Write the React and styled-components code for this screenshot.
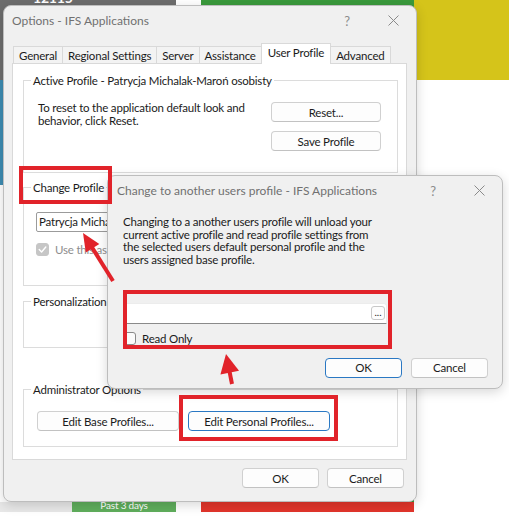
import React from "react";
import styled, { createGlobalStyle } from "styled-components";

const GlobalStyle = createGlobalStyle`
  html, body { margin: 0; padding: 0; background: #fff; }
  body {
    font-family: Lato, "Noto Sans", sans-serif;
    font-size: 11.5px;
    letter-spacing: -0.2px;
    color: #1b1b1b;
  }
`;

const Desktop = styled.div`
  position: relative;
  width: 509px;
  height: 521px;
  overflow: hidden;
  background: #fff;
`;

const Backdrop = styled.div`
  display: grid;
  grid-template-columns: 3px 69px 104px 25px 213px 95px;
  grid-template-rows: 80px 105px 317px 10px 1fr;
  width: 509px;
  height: 521px;
`;

const Tile = styled.div`
  grid-column: ${(p) => p.$col};
  grid-row: ${(p) => p.$row};
  background: ${(p) => p.$bg};
  color: #fff;
  overflow: hidden;
  display: flex;
  justify-content: ${(p) => (p.$center ? "center" : "flex-start")};
`;

const TileNumber = styled.span`
  margin: -9px 0 0 33px;
  font-weight: bold;
  font-size: 14px;
  line-height: 14px;
`;

const TileCaption = styled.span`
  margin-top: -2px;
  font-size: 10px;
  line-height: 10px;
`;

const Window = styled.div`
  position: absolute;
  left: ${(p) => p.$x}px;
  top: ${(p) => p.$y}px;
  width: ${(p) => p.$w}px;
  height: ${(p) => p.$h}px;
  box-sizing: border-box;
  background: #f0f0f0;
  border: 1px solid #bdbdbd;
  border-radius: 8px;
  box-shadow: 0 3px 12px rgba(0, 0, 0, 0.16);
  display: flex;
  flex-direction: column;
  overflow: hidden;
`;

const TitleBar = styled.div`
  flex: none;
  height: ${(p) => p.$h}px;
  display: flex;
  align-items: center;
  padding-left: ${(p) => p.$pad}px;
`;

const Title = styled.div`
  flex: 1;
  color: #707070;
  font-size: 12px;
  letter-spacing: 0;
  white-space: nowrap;
`;

const CaptionButton = styled.div`
  width: 46px;
  height: 100%;
  display: flex;
  align-items: center;
  justify-content: center;
  color: #8c8c8c;
  font-size: 13px;
`;

const Body = styled.div`
  flex: 1;
  display: flex;
  flex-direction: column;
  padding: 8px 9px 0 8px;
`;

const TabStrip = styled.div`
  display: flex;
  align-items: flex-end;
  height: 20px;
  padding-left: 1px;
  position: relative;
  z-index: 1;
`;

const Tab = styled.div`
  box-sizing: border-box;
  height: ${(p) => (p.$active ? 21 : 17)}px;
  margin-left: -1px;
  margin-bottom: ${(p) => (p.$active ? -1 : 0)}px;
  padding: 0 ${(p) => (p.$active ? 6 : 5)}px;
  border: 1px solid #d9d9d9;
  border-bottom: none;
  background: ${(p) => (p.$active ? "#fff" : "#f3f3f3")};
  display: flex;
  align-items: ${(p) => (p.$active ? "flex-start" : "center")};
  padding-top: ${(p) => (p.$active ? 2 : 0)}px;
  white-space: nowrap;
  &:first-child { margin-left: 0; }
`;

const TabPanel = styled.div`
  box-sizing: border-box;
  height: 397px;
  border: 1px solid #d9d9d9;
  background: #fff;
  display: flex;
  flex-direction: column;
  padding: 16px 8px 0 10px;
`;

const GroupBox = styled.div`
  position: relative;
  box-sizing: border-box;
  height: ${(p) => p.$h}px;
  margin-bottom: ${(p) => p.$gap || 0}px;
  border: 1px solid #dcdcdc;
  display: flex;
  padding: ${(p) => p.$pad};
`;

const GroupTitle = styled.span`
  position: absolute;
  left: 7px;
  top: -8px;
  padding: 0 2px;
  background: #fff;
  line-height: 15px;
  white-space: nowrap;
`;

const Hint = styled.div`
  flex: 1;
  line-height: 13px;
`;

const ButtonStack = styled.div`
  display: flex;
  flex-direction: column;
  gap: 9px;
  margin-top: 1px;
`;

const Button = styled.button`
  box-sizing: border-box;
  width: ${(p) => p.$w}px;
  height: 20px;
  padding: 0;
  font: inherit;
  letter-spacing: inherit;
  color: #1b1b1b;
  background: #fdfdfd;
  border: 1px solid ${(p) => (p.$default ? "#2a78c3" : "#d0d0d0")};
  border-bottom-color: ${(p) => (p.$default ? "#2a78c3" : "#c2c2c2")};
  border-radius: 4px;
  white-space: nowrap;
`;

const ProfileColumn = styled.div`
  display: flex;
  flex-direction: column;
  gap: 11px;
`;

const ProfileInput = styled.div`
  box-sizing: border-box;
  width: 230px;
  height: 20px;
  border: 1px solid #9b9b9b;
  border-radius: 2px;
  background: #fff;
  padding-left: 2px;
  line-height: 18px;
  white-space: nowrap;
`;

const CheckRow = styled.label`
  display: flex;
  align-items: center;
  gap: 6px;
  color: ${(p) => (p.$disabled ? "#8d8d8d" : "#1b1b1b")};
  white-space: nowrap;
`;

const CheckBox = styled.span`
  box-sizing: border-box;
  width: 13px;
  height: 13px;
  border-radius: 3px;
  flex: none;
  display: flex;
  align-items: center;
  justify-content: center;
  background: ${(p) => (p.$checked ? "#c6c6c6" : "#fbfbfb")};
  border: 1px solid ${(p) => (p.$checked ? "#c6c6c6" : "#8a8a8a")};
`;

const ButtonRow = styled.div`
  display: flex;
  gap: ${(p) => p.$gap}px;
  justify-content: ${(p) => (p.$end ? "flex-end" : "flex-start")};
  padding: ${(p) => p.$pad};
`;

const DialogBody = styled.div`
  flex: 1;
  display: flex;
  flex-direction: column;
  padding: 11px 0 0 15px;
`;

const Message = styled.p`
  margin: 0;
  line-height: 12.7px;
  white-space: nowrap;
`;

const PickerField = styled.div`
  box-sizing: border-box;
  width: 264px;
  height: 21px;
  margin-top: 36px;
  background: #fff;
  border: 1px solid #ececec;
  border-bottom-color: #8a8a8a;
  border-radius: 3px 3px 0 0;
  display: flex;
  align-items: center;
  justify-content: flex-end;
  padding-right: 1px;
`;

const EllipsisButton = styled.span`
  box-sizing: border-box;
  width: 14px;
  height: 14px;
  border: 1px solid #c8c8c8;
  border-radius: 3px;
  background: #fdfdfd;
  font-size: 10px;
  line-height: 10px;
  text-align: center;
  letter-spacing: 0;
  color: #222;
`;

const ReadOnlyRow = styled.div`
  margin-top: 8px;
`;

const Overlay = styled.svg`
  position: absolute;
  left: 0;
  top: 0;
  pointer-events: none;
`;

const Mark = styled.div`
  position: absolute;
  left: ${(p) => p.$x}px;
  top: ${(p) => p.$y}px;
  width: ${(p) => p.$w}px;
  height: ${(p) => p.$h}px;
  box-sizing: border-box;
  border: 4px solid #e1232a;
  pointer-events: none;
`;

function CloseGlyph() {
  return (
    <svg width="11" height="11" viewBox="0 0 11 11">
      <path d="M0.5 0.5 L10.5 10.5 M10.5 0.5 L0.5 10.5" stroke="#8a8a8a" strokeWidth="1" fill="none" />
    </svg>
  );
}

function Check() {
  return (
    <svg width="9" height="9" viewBox="0 0 9 9">
      <path d="M1.2 4.6 L3.6 7 L7.8 2" stroke="#fff" strokeWidth="1.4" fill="none" strokeLinecap="round" strokeLinejoin="round" />
    </svg>
  );
}

function Caption({ title, height, pad }) {
  return (
    <TitleBar $h={height} $pad={pad}>
      <Title>{title}</Title>
      <CaptionButton>?</CaptionButton>
      <CaptionButton><CloseGlyph /></CaptionButton>
    </TitleBar>
  );
}

const tabs = ["General", "Regional Settings", "Server", "Assistance", "User Profile", "Advanced"];

const messageLines = [
  "Changing to a another users profile will unload your",
  "current active profile and read profile settings from",
  "the selected users default personal profile and the",
  "users assigned base profile.",
];

function Arrow({ tail, tip, len, half }) {
  const dx = tip[0] - tail[0];
  const dy = tip[1] - tail[1];
  const d = Math.hypot(dx, dy);
  const ux = dx / d;
  const uy = dy / d;
  const bx = tip[0] - ux * len;
  const by = tip[1] - uy * len;
  const px = -uy * half;
  const py = ux * half;
  return (
    <g fill="#e1232a" stroke="#e1232a">
      <line x1={tail[0]} y1={tail[1]} x2={bx + ux * 2} y2={by + uy * 2} strokeWidth="4" />
      <polygon points={`${tip[0]},${tip[1]} ${bx + px},${by + py} ${bx - px},${by - py}`} strokeWidth="0" />
    </g>
  );
}

export default function App() {
  return (
    <Desktop>
      <GlobalStyle />
      <Backdrop>
        <Tile $col="1 / 4" $row="1" $bg="#6d6d6d"><TileNumber>12115</TileNumber></Tile>
        <Tile $col="5" $row="1 / 4" $bg="#3a9a3c" />
        <Tile $col="6" $row="1" $bg="#d5c41a" />
        <Tile $col="1" $row="2" $bg="#3e8db3" />
        <Tile $col="1 / 3" $row="4" $bg="#e8e8e8" />
        <Tile $col="3" $row="4" $bg="#5fae5c" $center><TileCaption>Past 3 days</TileCaption></Tile>
        <Tile $col="5" $row="4" $bg="#e2352b" />
      </Backdrop>

      <Window $x={3} $y={5} $w={414} $h={497}>
        <Caption title="Options - IFS Applications" height={29} pad={8} />
        <Body>
          <TabStrip>
            {tabs.map((t) => (
              <Tab key={t} $active={t === "User Profile"}>{t}</Tab>
            ))}
          </TabStrip>
          <TabPanel>
            <GroupBox $h={93} $gap={14} $pad="20px 16px 0 14px">
              <GroupTitle>Active Profile - Patrycja Michalak-Maroń osobisty</GroupTitle>
              <Hint>
                To reset to the application default look and
                <br />
                behavior, click Reset.
              </Hint>
              <ButtonStack>
                <Button $w={110}>Reset...</Button>
                <Button $w={110}>Save Profile</Button>
              </ButtonStack>
            </GroupBox>
            <GroupBox $h={99} $gap={15} $pad="24px 0 0 12px">
              <GroupTitle>Change Profile</GroupTitle>
              <ProfileColumn>
                <ProfileInput>Patrycja Michalak-Maroń osobisty</ProfileInput>
                <CheckRow $disabled>
                  <CheckBox $checked><Check /></CheckBox>
                  Use this as my default profile
                </CheckRow>
              </ProfileColumn>
            </GroupBox>
            <GroupBox $h={47} $gap={41} $pad="0">
              <GroupTitle>Personalization</GroupTitle>
            </GroupBox>
            <GroupBox $h={58} $pad="0">
              <GroupTitle>Administrator Options</GroupTitle>
              <ButtonRow $gap={9} $pad="21px 0 0 13px">
                <Button $w={142}>Edit Base Profiles...</Button>
                <Button $w={142} $default>Edit Personal Profiles...</Button>
              </ButtonRow>
            </GroupBox>
          </TabPanel>
          <ButtonRow $gap={8} $end $pad="8px 3px 0 0">
            <Button $w={77}>OK</Button>
            <Button $w={77}>Cancel</Button>
          </ButtonRow>
        </Body>
      </Window>

      <Window $x={107} $y={175} $w={396} $h={214}>
        <Caption title="Change to another users profile - IFS Applications" height={29} pad={9} />
        <DialogBody>
          <Message>
            {messageLines.map((line, i) => (
              <React.Fragment key={i}>
                {line}
                {i < messageLines.length - 1 && <br />}
              </React.Fragment>
            ))}
          </Message>
          <PickerField>
            <EllipsisButton>...</EllipsisButton>
          </PickerField>
          <ReadOnlyRow>
            <CheckRow>
              <CheckBox />
              Read Only
            </CheckRow>
          </ReadOnlyRow>
          <ButtonRow $gap={9} $end $pad="13px 14px 0 0">
            <Button $w={77} $default>OK</Button>
            <Button $w={77}>Cancel</Button>
          </ButtonRow>
        </DialogBody>
      </Window>

      <Mark $x={19} $y={166} $w={93} $h={38} />
      <Mark $x={123} $y={290} $w={269} $h={59} />
      <Mark $x={179} $y={395} $w={159} $h={46} />

      <Overlay width="509" height="521" viewBox="0 0 509 521">
        <Arrow tail={[113, 281]} tip={[83, 233]} len={18} half={8} />
        <Arrow tail={[232, 384]} tip={[226, 354]} len={19} half={9.5} />
      </Overlay>
    </Desktop>
  );
}
